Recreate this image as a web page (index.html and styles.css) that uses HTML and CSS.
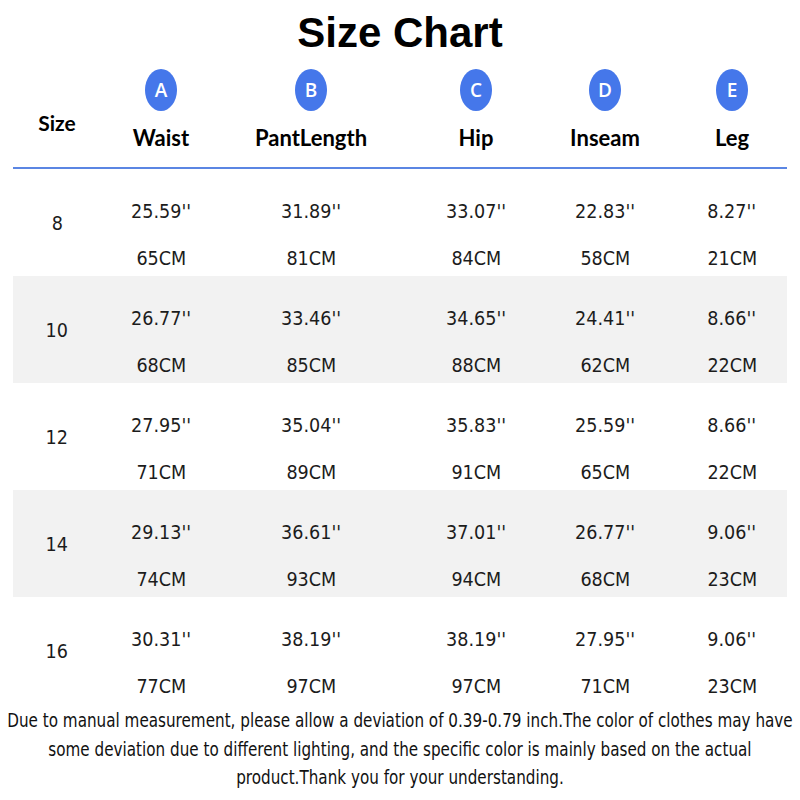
FILE: index.html
```html
<!DOCTYPE html>
<html>
<head>
<meta charset="utf-8">
<link rel="stylesheet" href="styles.css">
</head>
<body>
<div class="page">
  <h1 class="title">Size Chart</h1>
  <div class="grid head">
    <div class="hcell size-h">Size</div>
    <div class="hcell"><span class="badge">A</span><span class="hlabel">Waist</span></div>
    <div class="hcell"><span class="badge">B</span><span class="hlabel">PantLength</span></div>
    <div class="hcell"><span class="badge">C</span><span class="hlabel">Hip</span></div>
    <div class="hcell"><span class="badge">D</span><span class="hlabel">Inseam</span></div>
    <div class="hcell leg"><span class="badge">E</span><span class="hlabel">Leg</span></div>
  </div>
  <div class="rule"></div>
  <div class="grid row">
    <div class="size"><span>8</span></div>
    <div class="cell"><span>25.59''</span><span>65CM</span></div>
    <div class="cell"><span>31.89''</span><span>81CM</span></div>
    <div class="cell"><span>33.07''</span><span>84CM</span></div>
    <div class="cell"><span>22.83''</span><span>58CM</span></div>
    <div class="cell leg"><span>8.27''</span><span>21CM</span></div>
  </div>
  <div class="grid row alt">
    <div class="size"><span>10</span></div>
    <div class="cell"><span>26.77''</span><span>68CM</span></div>
    <div class="cell"><span>33.46''</span><span>85CM</span></div>
    <div class="cell"><span>34.65''</span><span>88CM</span></div>
    <div class="cell"><span>24.41''</span><span>62CM</span></div>
    <div class="cell leg"><span>8.66''</span><span>22CM</span></div>
  </div>
  <div class="grid row">
    <div class="size"><span>12</span></div>
    <div class="cell"><span>27.95''</span><span>71CM</span></div>
    <div class="cell"><span>35.04''</span><span>89CM</span></div>
    <div class="cell"><span>35.83''</span><span>91CM</span></div>
    <div class="cell"><span>25.59''</span><span>65CM</span></div>
    <div class="cell leg"><span>8.66''</span><span>22CM</span></div>
  </div>
  <div class="grid row alt">
    <div class="size"><span>14</span></div>
    <div class="cell"><span>29.13''</span><span>74CM</span></div>
    <div class="cell"><span>36.61''</span><span>93CM</span></div>
    <div class="cell"><span>37.01''</span><span>94CM</span></div>
    <div class="cell"><span>26.77''</span><span>68CM</span></div>
    <div class="cell leg"><span>9.06''</span><span>23CM</span></div>
  </div>
  <div class="grid row">
    <div class="size"><span>16</span></div>
    <div class="cell"><span>30.31''</span><span>77CM</span></div>
    <div class="cell"><span>38.19''</span><span>97CM</span></div>
    <div class="cell"><span>38.19''</span><span>97CM</span></div>
    <div class="cell"><span>27.95''</span><span>71CM</span></div>
    <div class="cell leg"><span>9.06''</span><span>23CM</span></div>
  </div>
  <div class="note-wrap">
    <p class="note">Due to manual measurement, please allow a deviation of 0.39-0.79 inch.The color of clothes may have<br>some deviation due to different lighting, and the specific color is mainly based on the actual<br>product.Thank you for your understanding.</p>
  </div>
</div>
</body>
</html>
```
FILE: styles.css
```css
html, body {
  margin: 0;
  padding: 0;
  background: #fff;
}
.page {
  width: 800px;
  height: 800px;
  overflow: hidden;
  color: #111;
}
.title {
  margin: 0;
  height: 62px;
  line-height: 62px;
  padding-top: 2px;
  box-sizing: border-box;
  text-align: center;
  font-family: "Liberation Sans", Arial, sans-serif;
  font-weight: 700;
  font-size: 42px;
  color: #000;
}
.grid {
  display: grid;
  grid-template-columns: 88px 120px 180px 150px 108px 128px;
  margin: 0 13px;
}
.head {
  height: 105px;
}
.hcell {
  display: flex;
  flex-direction: column;
  align-items: center;
  font-family: Lato, "Open Sans", sans-serif;
  font-weight: 700;
  font-size: 22px;
  color: #000;
}
.size-h {
  padding-top: 47px;
  line-height: 28px;
  font-size: 21px;
}
.badge {
  margin-top: 7px;
  width: 32px;
  height: 42px;
  border-radius: 50%;
  background: #4577ea;
  color: #fff;
  font-family: "Open Sans", sans-serif;
  font-weight: 600;
  font-size: 19px;
  line-height: 42px;
  text-align: center;
}
.hlabel {
  margin-top: 13px;
  line-height: 28px;
}
.leg {
  padding-left: 18px;
}
.rule {
  margin: 0 13px;
  height: 2px;
  background: #5b86e3;
}
.row {
  height: 107px;
  font-family: "DejaVu Sans", sans-serif;
  font-size: 20px;
  color: #1c1c1c;
}
.row.alt {
  background: #f2f2f2;
}
.size {
  display: flex;
  align-items: center;
  justify-content: center;
  padding-bottom: 4px;
}
.cell {
  display: flex;
  flex-direction: column;
  align-items: center;
  padding-top: 19px;
}
.cell span,
.size span {
  display: inline-block;
  line-height: 47px;
  transform: scaleX(0.88);
}
.note-wrap {
  width: 792px;
  margin-left: 4px;
  padding-top: 2px;
}
.note {
  margin: 0;
  width: 1042px;
  transform: scaleX(0.76);
  transform-origin: 0 0;
  text-align: center;
  font-family: "DejaVu Sans", sans-serif;
  font-size: 20px;
  line-height: 28.5px;
  color: #111;
  white-space: nowrap;
}
```
